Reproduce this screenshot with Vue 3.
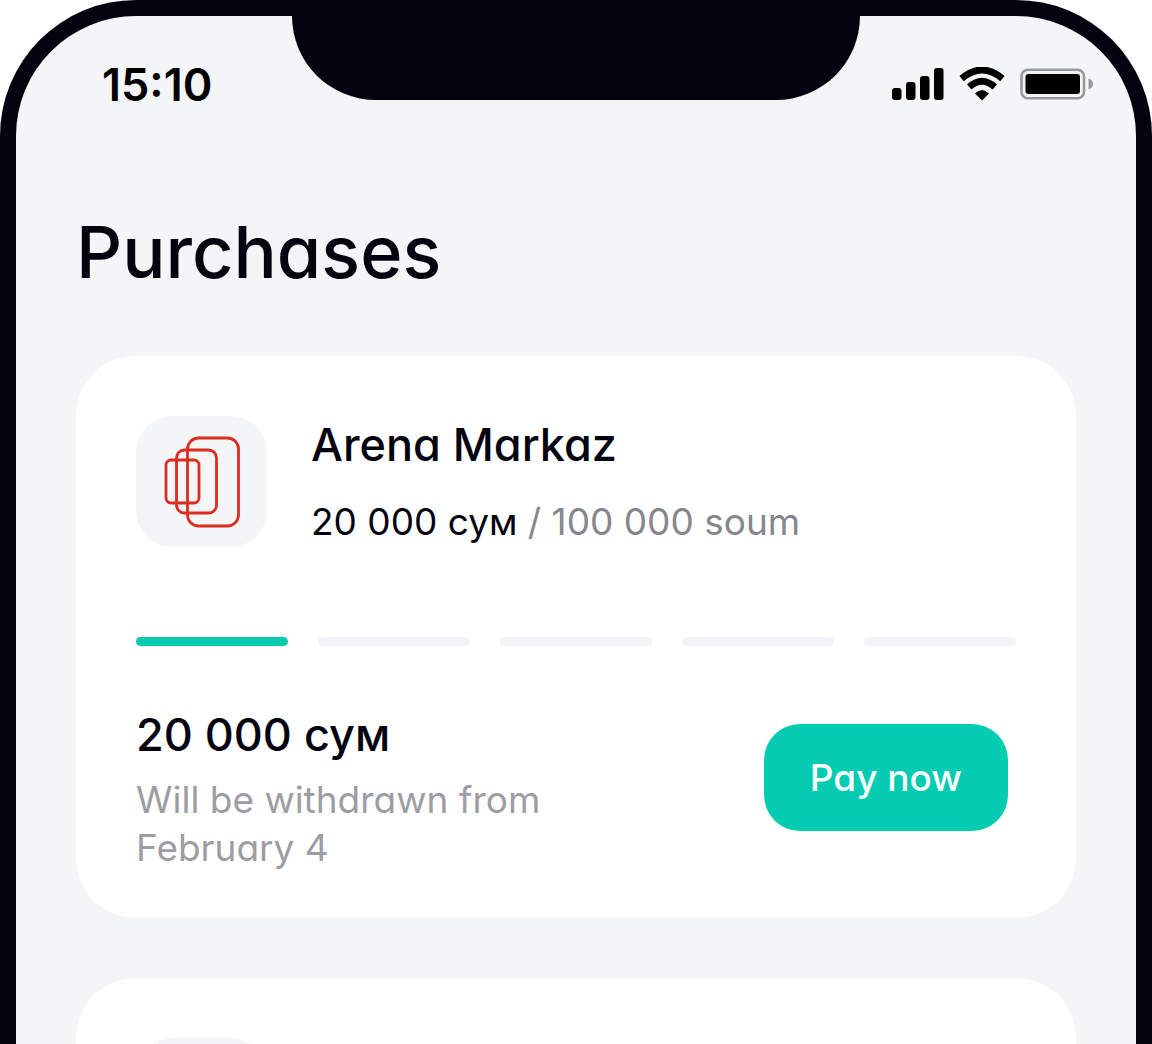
<script setup>
const signalBars = [12, 18, 24, 32]
const installments = 5
const paid = 1
</script>

<template>
  <div class="phone">
    <header class="status">
      <time class="clock">15:10</time>
      <div class="notch"></div>
      <div class="indicators">
        <svg width="52" height="32" viewBox="0 0 52 32" aria-label="Signal">
          <rect
            v-for="(h, i) in signalBars"
            :key="h"
            :x="i * 14"
            :y="32 - h"
            width="9.5"
            :height="h"
            rx="3"
          />
        </svg>
        <svg width="46" height="34" viewBox="0 0 46 34" aria-label="Wi-Fi">
          <path d="M2.6 11.6Q23 -5.600 43.400 11.6" fill="none" stroke="#000" stroke-width="6.8" />
          <path d="M10.2 20Q23 8.600 35.800 20" fill="none" stroke="#000" stroke-width="6.6" />
          <path d="M16 26.6Q23 19.400 30 26.6L23 33.4Z" />
        </svg>
        <svg width="74" height="32" viewBox="0 0 74 32" aria-label="Battery">
          <rect x="1.5" y="1.7" width="62.5" height="28.6" rx="6.5" fill="none" stroke="#98999b" stroke-width="2.6" />
          <rect x="5.5" y="6" width="54.5" height="20" rx="3" />
          <path d="M68.500 10.500Q73 12.500 73 16T68.500 21.500Z" fill="#98999b" />
        </svg>
      </div>
    </header>

    <main class="content">
      <h1 class="title">Purchases</h1>

      <article class="card">
        <div class="store">
          <div class="tile">
            <svg width="76" height="92" viewBox="0 0 76 92" fill="none" stroke="#dd2c20" stroke-width="2.800" aria-hidden="true">
              <rect x="23.500" y="2" width="51" height="88" rx="11" />
              <rect x="12.500" y="14" width="40" height="63" rx="8" />
              <rect x="2" y="24" width="33" height="43" rx="5" />
            </svg>
          </div>
          <div class="details">
            <h2 class="heading">Arena Markaz</h2>
            <p class="sum">20 000 сум <span class="total">/ 100 000 soum</span></p>
          </div>
        </div>

        <div class="progress">
          <span v-for="n in installments" :key="n" class="step" :class="{ done: n <= paid }"></span>
        </div>

        <div class="payment">
          <div>
            <p class="heading">20 000 сум</p>
            <p class="note">Will be withdrawn from<br />February 4</p>
          </div>
          <button type="button" class="pay">Pay now</button>
        </div>
      </article>

      <article class="card">
        <div class="tile"></div>
      </article>
    </main>
  </div>
</template>

<style>
body {
  margin: 0;
  background: #fff;
}
</style>

<style scoped>
.phone {
  box-sizing: border-box;
  height: 100vh;
  overflow: hidden;
  border: 16px solid #03020f;
  border-bottom: 0;
  border-radius: 136px 136px 0 0;
  background: #f4f5f7;
  color: #03020f;
  font-family: Inter, "Liberation Sans", sans-serif;
  font-feature-settings: "cv11";
}

.status {
  display: grid;
  grid-template-columns: 1fr 568px 1fr;
}

.clock {
  padding: 42px 0 0 86px;
  color: #000;
  font-size: 45px;
  font-weight: 600;
  line-height: 54px;
}

.notch {
  height: 84px;
  border-radius: 0 0 84px 84px;
  background: #03020f;
}

.indicators {
  display: flex;
  align-items: center;
  justify-content: flex-end;
  gap: 15px;
  padding: 40px 42px 0 0;
}

.content {
  padding: 0 60px;
}

.title {
  margin: 96px 0 60px;
  font-size: 72px;
  font-weight: 500;
  line-height: 88px;
}

.card {
  margin-bottom: 60px;
  padding: 60px 60px 46px;
  border-radius: 60px;
  background: #fff;
}

.store {
  display: flex;
  gap: 44px;
}

.tile {
  display: flex;
  align-items: center;
  justify-content: center;
  width: 131px;
  height: 131px;
  border-radius: 36px;
  background: #f4f5f7;
}

.heading {
  margin: 0;
  font-size: 45px;
  font-weight: 500;
  line-height: 58px;
}

.sum {
  margin: 24px 0 0;
  font-size: 37px;
  line-height: 48px;
}

.total {
  color: #86868e;
}

.progress {
  display: flex;
  gap: 30px;
  margin-top: 90px;
}

.step {
  flex: 1;
  height: 9px;
  border-radius: 5px;
  background: #f3f3f8;
}

.done {
  background: #03ccb2;
}

.payment {
  display: flex;
  align-items: flex-start;
  justify-content: space-between;
  padding: 60px 8px 0 0;
}

.note {
  margin: 12px 0 0;
  color: #9d9da3;
  font-size: 37px;
  line-height: 48px;
}

.pay {
  margin-top: 18px;
  padding: 30px 46px;
  border: 0;
  border-radius: 36px;
  background: #03ccb2;
  color: #fff;
  font: inherit;
  font-feature-settings: inherit;
  font-size: 37px;
  font-weight: 500;
  line-height: 47px;
}
</style>
